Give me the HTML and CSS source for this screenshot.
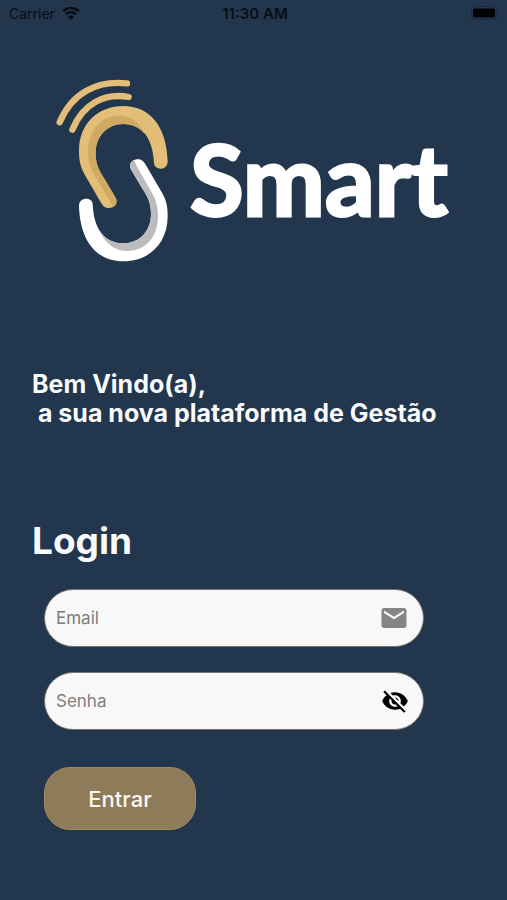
FILE: index.html
```html
<!DOCTYPE html>
<html lang="pt-BR">
<head>
    <meta charset="UTF-8">
    <meta name="viewport" content="width=device-width, initial-scale=1.0">
    <title>Smart - Login</title>
    <link rel="stylesheet" href="styles.css">
</head>
<body>
    <div class="status-bar">
        <div class="carrier">
            <span>Carrier</span>
            <svg class="wifi" viewBox="0 0 18 14" aria-hidden="true">
                <path d="M1.2 5.2a11.2 11.2 0 0 1 15.6 0M4 8.3a7.2 7.2 0 0 1 10 0" fill="none" stroke="currentColor" stroke-width="2.6"/>
                <path d="M9 14L5.9 10.8a4.4 4.4 0 0 1 6.2 0z" fill="currentColor"/>
            </svg>
        </div>
        <span class="clock">11:30 AM</span>
        <svg class="battery" viewBox="0 0 30 14" aria-hidden="true">
            <rect x="0.5" y="0.5" width="25" height="13" rx="3.5" fill="none" stroke="#1a2a3e"/>
            <rect x="2" y="2.500" width="22" height="9" rx="1.500" fill="#020305"/>
            <path d="M27.5 5v4c1.800-.6 1.800-3.400 0-4z" fill="#1a2a3e"/>
        </svg>
    </div>

    <main class="page">
        <div class="brand">
            <svg class="logo" viewBox="30 0 345 600" aria-hidden="true">
                <g fill="none" stroke="#e3be78" stroke-width="19" stroke-linecap="round">
                    <path d="M44 157C80 70 155 30 246 40"/>
                    <path d="M82 179C115 100 180 68 251 81"/>
                </g>
                <path d="M327 280C324 205 292 162 235 162C185 162 152 200 152 250C152 285 163 303 179 328L211 382C222 401 208 414 191 414C180 414 174 408 168 398L118 312C106 290 102 272 102 243C102 160 160 108 235 108C312 108 364 165 368 272C370 302 329 303 327 280Z" fill="#e3be78"/>
                <path d="M300 193C283 156 257 137 222 137C165 137 129 184 129 245C129 278 138 298 152 322L193 390Q200 403 203 411C215 405 218 395 211 382L179 328C163 303 152 285 152 250C152 200 185 162 235 162C262 162 284 174 300 193Z" fill="#d0aa62"/>
                <g transform="rotate(180 235 341)">
                    <path d="M327 280C324 205 292 162 235 162C185 162 152 200 152 250C152 285 163 303 179 328L211 382C222 401 208 414 191 414C180 414 174 408 168 398L118 312C106 290 102 272 102 243C102 160 160 108 235 108C312 108 364 165 368 272C370 302 329 303 327 280Z" fill="#fff"/>
                    <path d="M322 240C303 170 266 137 222 139C165 141 131 184 131 245C131 278 140 298 154 322L193 390Q200 403 203 411C215 405 218 395 211 382L179 328C163 303 152 285 152 250C152 200 185 162 235 162C280 162 310 190 322 240Z" fill="#bcbcbf"/>
                </g>
            </svg>
            <span class="brand-name">Smart</span>
        </div>

        <p class="welcome">Bem Vindo(a),<br>&nbsp;a sua nova plataforma de Gestão</p>

        <h1 class="title">Login</h1>

        <form class="login-form">
            <div class="field">
                <input type="email" id="email" placeholder="Email" aria-label="Email">
                <svg class="field-icon mail" viewBox="0 0 24 24" aria-hidden="true">
                    <path d="M20 4H4c-1.100 0-2 .9-2 2v12c0 1.100.9 2 2 2h16c1.100 0 2-.9 2-2V6c0-1.100-.9-2-2-2zm0 4l-8 5-8-5V6l8 5 8-5v2z"/>
                </svg>
            </div>
            <div class="field">
                <input type="password" id="senha" placeholder="Senha" aria-label="Senha">
                <button type="button" class="toggle" id="toggle" aria-label="Mostrar senha">
                    <svg class="field-icon" viewBox="0 0 24 24" aria-hidden="true">
                        <path d="M12 7c2.760 0 5 2.240 5 5 0 .65-.13 1.260-.36 1.830l2.920 2.920c1.510-1.260 2.700-2.890 3.430-4.750-1.730-4.390-6-7.500-11-7.500-1.400 0-2.740.25-3.980.7l2.160 2.160C10.740 7.130 11.350 7 12 7zM2 4.270l2.280 2.280.46.46C3.080 8.300 1.780 10.020 1 12c1.730 4.390 6 7.500 11 7.500 1.550 0 3.030-.3 4.380-.84l.42.42L19.730 22 21 20.730 3.270 3 2 4.270zM7.530 9.800l1.550 1.550c-.05.21-.08.43-.08.65 0 1.660 1.340 3 3 3 .22 0 .44-.03.65-.08l1.550 1.550c-.67.33-1.410.53-2.200.53-2.760 0-5-2.240-5-5 0-.79.2-1.530.53-2.200zm4.310-.78l3.150 3.150.02-.16c0-1.660-1.340-3-3-3l-.17.010z"/>
                    </svg>
                </button>
            </div>
            <button type="submit" class="submit">Entrar</button>
        </form>
    </main>

    <script>
        const senha = document.getElementById('senha');

        document.getElementById('toggle').addEventListener('click', function() {
            senha.type = senha.type === 'password' ? 'text' : 'password';
        });
    </script>
</body>
</html>
```
FILE: styles.css
```css
* {
    box-sizing: border-box;
}

body {
    margin: 0;
    min-height: 100vh;
    background-color: #22364e;
    color: #f8fafc;
    font-family: Inter, "Liberation Sans", sans-serif;
}

.status-bar {
    display: grid;
    grid-template-columns: 1fr auto 1fr;
    align-items: center;
    height: 26px;
    padding: 0 6px 0 9px;
    color: #080e16;
    font-size: 14px;
}

.carrier {
    display: flex;
    align-items: center;
    gap: 7px;
}

.wifi {
    width: 18px;
    height: 14px;
}

.clock {
    font-size: 15px;
    font-weight: 600;
}

.battery {
    width: 30px;
    height: 14px;
    justify-self: end;
}

.page {
    padding: 44px 32px 32px;
}

.brand {
    display: flex;
    align-items: center;
    gap: 20px;
    padding: 0 23px;
    margin-bottom: 100px;
}

.logo {
    flex: none;
    width: 115px;
    height: 200px;
}

.brand-name {
    padding-top: 16px;
    color: #fff;
    font-family: Lato, sans-serif;
    font-size: 98px;
    font-weight: 700;
    line-height: 120px;
    -webkit-text-stroke: 3px #fff;
}

.welcome {
    margin: 0 0 90px;
    font-size: 25px;
    font-weight: 700;
    line-height: 29px;
}

.title {
    margin: 0 0 25px;
    font-size: 37px;
    font-weight: 700;
    line-height: 46px;
}

.login-form {
    display: flex;
    flex-direction: column;
    align-items: flex-start;
    gap: 25px;
    padding: 0 51px 0 12px;
}

.field {
    display: flex;
    align-items: center;
    width: 100%;
    height: 58px;
    padding: 0 14px 0 11px;
    background-color: #f8f8f8;
    border: 1px solid #77736b;
    border-radius: 29px;
}

.field input {
    flex: 1;
    min-width: 0;
    padding: 0;
    border: 0;
    outline: none;
    background: none;
    color: #222;
    font: inherit;
    font-size: 17px;
}

.field input::placeholder {
    color: #7d7d7d;
}

.field-icon {
    display: block;
    width: 28px;
    height: 28px;
    fill: #000;
}

.mail {
    width: 30px;
    height: 30px;
    fill: #858585;
}

.toggle {
    padding: 0;
    border: 0;
    background: none;
    cursor: pointer;
}

.submit {
    width: 152px;
    height: 63px;
    margin-top: 12px;
    border: 1px solid #a38b5c;
    border-radius: 26px;
    background-color: #8d7b59;
    color: #fbf8f2;
    font: inherit;
    font-size: 22px;
    font-weight: 500;
    cursor: pointer;
}
```
